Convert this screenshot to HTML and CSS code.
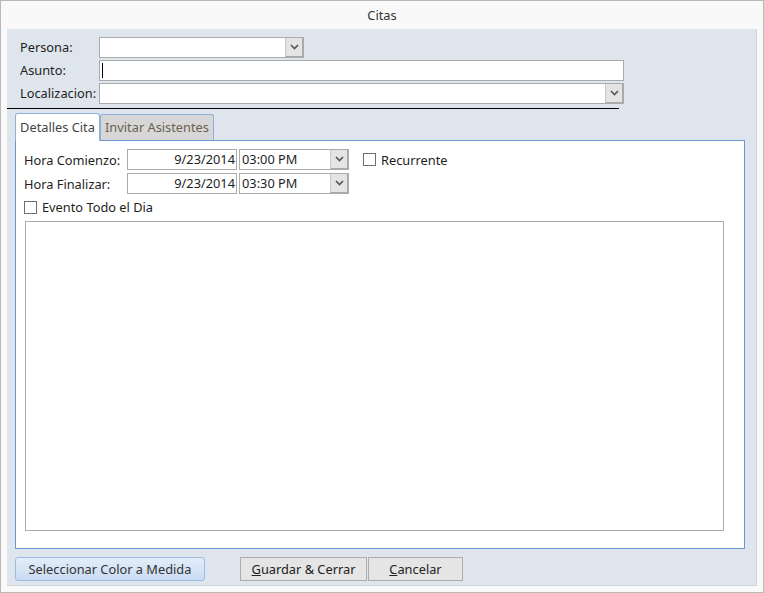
FILE: index.html
```html
<!DOCTYPE html>
<html lang="es">
<head>
  <meta charset="UTF-8">
  <title>Citas</title>
  <link rel="stylesheet" href="styles.css">
</head>
<body>
  <div class="window">
    <div class="title">Citas</div>

    <div class="panel">
      <!-- Campos de cabecera -->
      <div class="fields">
        <label class="field-label">Persona:</label>
        <div class="combo combo-short">
          <span class="combo-value"></span>
          <span class="combo-btn">
            <svg width="9" height="6" viewBox="0 0 9 6"><path d="M1 1 L4.5 4.5 L8 1" fill="none" stroke="#555" stroke-width="1.6"/></svg>
          </span>
        </div>

        <label class="field-label">Asunto:</label>
        <div class="textbox textbox-long"><span class="caret"></span></div>

        <label class="field-label">Localizacion:</label>
        <div class="combo combo-long">
          <span class="combo-value"></span>
          <span class="combo-btn">
            <svg width="9" height="6" viewBox="0 0 9 6"><path d="M1 1 L4.5 4.5 L8 1" fill="none" stroke="#555" stroke-width="1.6"/></svg>
          </span>
        </div>
      </div>

      <div class="rule"></div>

      <!-- Pestañas -->
      <div class="tabs">
        <div class="tab tab-active">Detalles Cita</div>
        <div class="tab tab-invite">Invitar Asistentes</div>
      </div>

      <div class="tab-panel">
        <div class="time-row">
          <span class="time-label">Hora Comienzo:</span>
          <div class="datebox">9/23/2014</div>
          <div class="combo combo-time">
            <span class="combo-value">03:00 PM</span>
            <span class="combo-btn">
              <svg width="9" height="6" viewBox="0 0 9 6"><path d="M1 1 L4.5 4.5 L8 1" fill="none" stroke="#555" stroke-width="1.6"/></svg>
            </span>
          </div>
          <label class="check check-recurrent"><span class="box"></span>Recurrente</label>
        </div>
        <div class="time-row">
          <span class="time-label">Hora Finalizar:</span>
          <div class="datebox">9/23/2014</div>
          <div class="combo combo-time">
            <span class="combo-value">03:30 PM</span>
            <span class="combo-btn">
              <svg width="9" height="6" viewBox="0 0 9 6"><path d="M1 1 L4.5 4.5 L8 1" fill="none" stroke="#555" stroke-width="1.6"/></svg>
            </span>
          </div>
        </div>

        <label class="check check-allday"><span class="box"></span>Evento Todo el Dia</label>

        <div class="memo"></div>
      </div>

      <!-- Botones -->
      <div class="buttons">
        <button class="btn btn-color">Seleccionar Color a Medida</button>
        <button class="btn btn-save"><u>G</u>uardar &amp; Cerrar</button>
        <button class="btn btn-cancel"><u>C</u>ancelar</button>
      </div>
    </div>
  </div>
</body>
</html>
```

FILE: styles.css
```css
html, body {
  margin: 0;
  padding: 0;
}
body {
  font-family: "Noto Sans", "Open Sans", sans-serif;
  font-size: 12.8px;
  color: #1e1e1e;
  background: #ffffff;
}

/* Ventana */
.window {
  width: 764px;
  height: 593px;
  box-sizing: border-box;
  border: 1px solid #b9b9b9;
  background: #f9f9f9;
  display: flex;
  flex-direction: column;
}
.title {
  height: 28px;
  line-height: 28px;
  text-align: center;
  color: #333;
}
.panel {
  flex: 1;
  margin: 0 6px 6px 6px;
  background: #dfe5ed;
  border-right: 1px solid #d0d6dc;
  border-bottom: 1px solid #d0d6dc;
  display: flex;
  flex-direction: column;
}

/* Campos */
.fields {
  display: grid;
  grid-template-columns: 92px auto;
  row-gap: 2px;
  padding-top: 8px;
  justify-items: start;
}
.field-label {
  padding-left: 13px;
  line-height: 20px;
  white-space: nowrap;
}
.textbox, .combo, .datebox {
  height: 21px;
  box-sizing: border-box;
  border: 1px solid #ababab;
  background: #fff;
}
.textbox-long { width: 525px; position: relative; }
.caret {
  position: absolute;
  left: 2px;
  top: 2px;
  width: 1px;
  height: 15px;
  background: #000;
}
.combo {
  display: flex;
  align-items: stretch;
}
.combo-short { width: 205px; }
.combo-long { width: 525px; }
.combo-value {
  flex: 1;
  padding-left: 2px;
  line-height: 19px;
}
.combo-btn {
  width: 16px;
  background: #e4e4e4;
  border-left: 1px solid #c8c8c8;
  border-right: 1px solid #a9a9a9;
  border-bottom: 1px solid #a9a9a9;
  display: flex;
  align-items: center;
  justify-content: center;
}
.rule {
  width: 612px;
  height: 1px;
  background: #000;
  margin-top: 4px;
}

/* Pestañas */
.tabs {
  display: flex;
  align-items: flex-end;
  margin: 3px 0 0 8px;
  height: 28px;
}
.tab {
  height: 26px;
  box-sizing: border-box;
  padding: 0;
  text-align: center;
  white-space: nowrap;
  line-height: 25px;
  background: #d7d7d7;
  border: 1px solid #8eb0da;
  border-bottom: none;
  border-radius: 3px 3px 0 0;
  color: #6b5f52;
}
.tab-active {
  height: 28px;
  width: 85px;
  line-height: 27px;
  background: #fff;
  color: #444;
  position: relative;
  top: 1px;
  z-index: 1;
}
.tab-invite {
  width: 114px;
}
.tab-panel {
  margin: 0 11px 0 8px;
  height: 409px;
  box-sizing: border-box;
  border: 1px solid #6b98d3;
  background: #fff;
  padding: 8px 0 0 8px;
}
.time-row {
  display: flex;
  align-items: center;
  height: 21px;
  margin-bottom: 3px;
}
.time-label {
  width: 103px;
  white-space: nowrap;
}
.datebox {
  width: 110px;
  text-align: right;
  padding-right: 1px;
  line-height: 19px;
}
.combo-time {
  width: 110px;
  margin-left: 2px;
}
.check {
  display: flex;
  align-items: center;
  gap: 5px;
}
.box {
  width: 11px;
  height: 11px;
  border: 1px solid #6e6e6e;
  background: #fff;
}
.check-recurrent { margin-left: 14px; }
.check-allday {
  margin: 4px 0 0 0;
  height: 18px;
}
.memo {
  width: 699px;
  height: 310px;
  box-sizing: border-box;
  border: 1px solid #ababab;
  margin: 5px 0 0 1px;
}

/* Botones */
.buttons {
  display: flex;
  align-items: center;
  margin: 8px 0 0 8px;
}
.btn {
  font-family: inherit;
  font-size: 12.8px;
  height: 24px;
  box-sizing: border-box;
  padding: 0;
  color: #222;
}
.btn-color {
  width: 190px;
  border: 1px solid #9bbbe3;
  border-radius: 3px;
  background: linear-gradient(#e4edf9, #c9dbf2);
  color: #333;
}
.btn-save {
  width: 127px;
  margin-left: 35px;
  border: 1px solid #adadad;
  background: #e5e5e5;
}
.btn-cancel {
  width: 95px;
  margin-left: 1px;
  border: 1px solid #adadad;
  background: #e5e5e5;
}
```
